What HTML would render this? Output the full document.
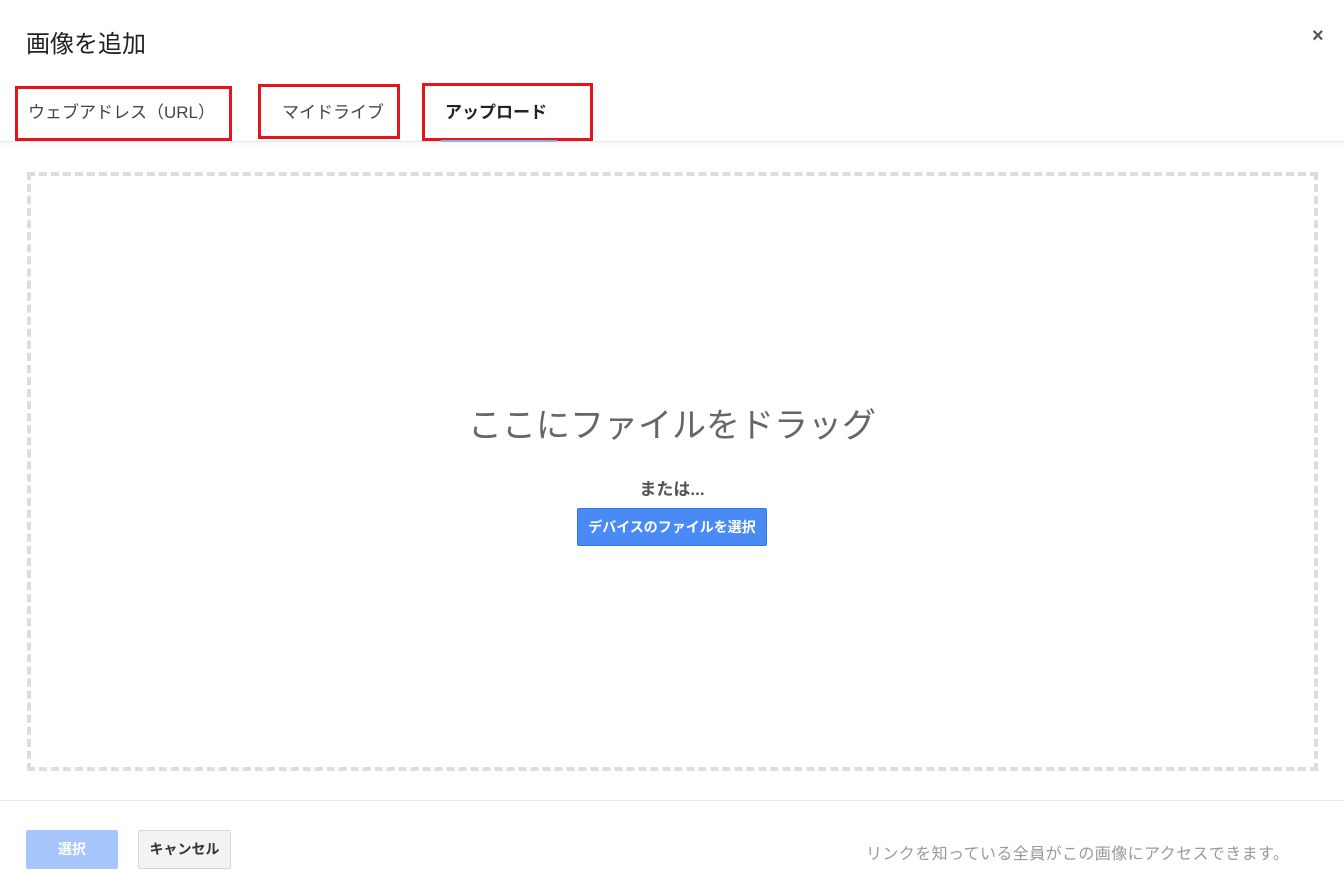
<!DOCTYPE html>
<html><head><meta charset="utf-8"><style>
body{margin:0;width:1344px;height:896px;background:#fff;font-family:"Liberation Sans","Noto Sans CJK JP",sans-serif;position:relative;overflow:hidden;color:#222}
.a{position:absolute}
.box{position:absolute;border:3px solid #e8141c;box-sizing:border-box}
</style></head><body>
<div class="a" style="left:26px;top:24px;font-size:24px;color:#222">画像を追加</div>
<div class="a" style="left:1312px;top:25px;font-size:20px;color:#555;font-weight:bold">×</div>
<div class="a" style="left:0;top:141px;width:1344px;height:1px;background:#e5e5e5;box-shadow:0 2px 4px rgba(0,0,0,0.12)"></div>
<div class="box" style="left:15px;top:86px;width:217px;height:55px"></div>
<div class="box" style="left:258px;top:84px;width:142px;height:55px"></div>
<div class="box" style="left:422px;top:83px;width:171px;height:58px"></div>
<div class="a" style="left:28px;top:98px;font-size:17px;color:#444">ウェブアドレス（URL）</div>
<div class="a" style="left:282px;top:98px;font-size:17px;color:#444">マイドライブ</div>
<div class="a" style="left:445px;top:98px;font-size:17px;color:#222;font-weight:bold">アップロード</div>
<div class="a" style="left:441px;top:140px;width:116px;height:2px;background:#8ab0f5"></div>
<div class="a" style="left:27px;top:172px;width:1291px;height:599px;border:4px dashed #ddd;box-sizing:border-box"></div>
<div class="a" style="left:0;top:398px;width:1344px;text-align:center;font-size:34px;color:#666">ここにファイルをドラッグ</div>
<div class="a" style="left:0;top:475px;width:1344px;text-align:center;font-size:17px;color:#555;font-weight:bold">または...</div>
<div class="a" style="left:577px;top:508px;width:190px;height:38px;background:#4a8af4;border:1px solid #3079ed;box-sizing:border-box;border-radius:2px;color:#fff;font-size:14px;font-weight:bold;text-align:center;line-height:36px">デバイスのファイルを選択</div>
<div class="a" style="left:0;top:800px;width:1344px;height:1px;background:#e5e5e5"></div>
<div class="a" style="left:26px;top:830px;width:92px;height:39px;background:#a6c5fb;border-radius:2px;color:#fff;font-size:14px;font-weight:bold;text-align:center;line-height:39px">選択</div>
<div class="a" style="left:138px;top:830px;width:93px;height:39px;background:#f3f3f3;border:1px solid #d8d8d8;box-sizing:border-box;border-radius:2px;color:#333;font-size:14px;font-weight:bold;text-align:center;line-height:37px">キャンセル</div>
<div class="a" style="left:866px;top:840px;font-size:16px;letter-spacing:0.4px;color:#999">リンクを知っている全員がこの画像にアクセスできます。</div>
</body></html>
